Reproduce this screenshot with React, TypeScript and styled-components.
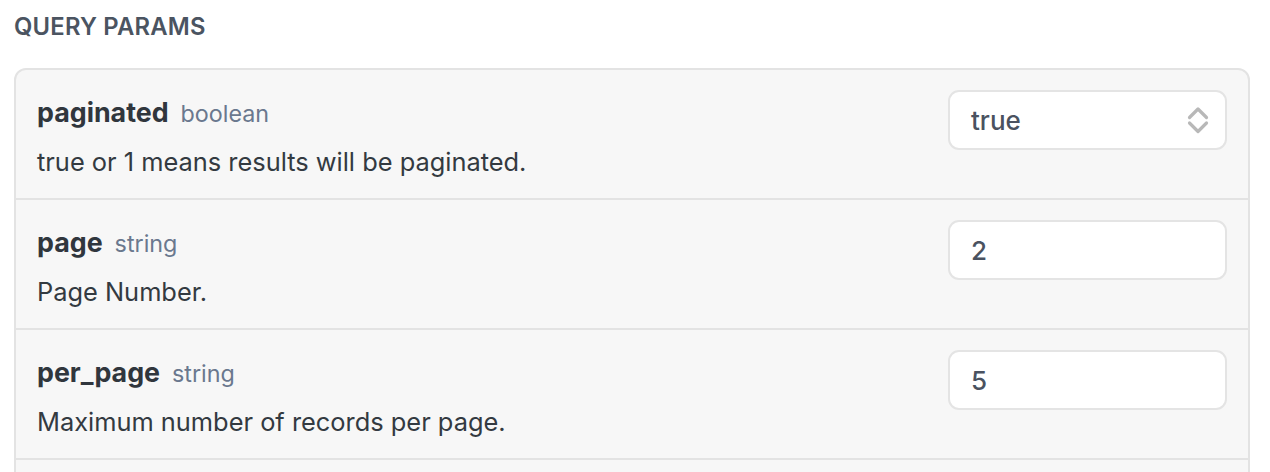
import styled, { createGlobalStyle } from "styled-components";

type Param = {
  name: string;
  type: string;
  description: string;
  value: string;
  kind: "select" | "text";
};

const params: Param[] = [
  {
    name: "paginated",
    type: "boolean",
    description: "true or 1 means results will be paginated.",
    value: "true",
    kind: "select",
  },
  {
    name: "page",
    type: "string",
    description: "Page Number.",
    value: "2",
    kind: "text",
  },
  {
    name: "per_page",
    type: "string",
    description: "Maximum number of records per page.",
    value: "5",
    kind: "text",
  },
];

const SelectChevrons = () => (
  <svg width="22" height="30" viewBox="0 0 22 30" fill="none">
    <path
      d="M2.5 12.5 L11 4 L19.5 12.5"
      stroke="#b8b8b8"
      strokeWidth="3.2"
      strokeLinecap="round"
      strokeLinejoin="round"
    />
    <path
      d="M2.5 18 L11 26.5 L19.5 18"
      stroke="#b8b8b8"
      strokeWidth="3.2"
      strokeLinecap="round"
      strokeLinejoin="round"
    />
  </svg>
);

const App = () => {
  return (
    <>
      <GlobalStyle />
      <Page>
        <SectionTitle>Query Params</SectionTitle>
        <Card>
          {params.map((param) => (
            <Row key={param.name}>
              <Info>
                <NameLine>
                  <Name>{param.name}</Name>
                  <Type>{param.type}</Type>
                </NameLine>
                <Description>{param.description}</Description>
              </Info>
              <Field>
                <FieldValue>{param.value}</FieldValue>
                {param.kind === "select" && <SelectChevrons />}
              </Field>
            </Row>
          ))}
        </Card>
      </Page>
    </>
  );
};

export default App;

/* -------- styles -------- */

const GlobalStyle = createGlobalStyle`
  html, body {
    margin: 0;
    padding: 0;
    overflow: hidden;
    background: #fff;
  }

  body {
    font-family: Inter, "Noto Sans", "Liberation Sans", sans-serif;
    -webkit-font-smoothing: antialiased;
  }
`;

const Page = styled.div`
  padding: 15px 20px 0 14px;
`;

const SectionTitle = styled.h2`
  margin: 0 0 29px 0;
  font-size: 23.8px;
  line-height: 24px;
  font-weight: 600;
  letter-spacing: 0.2px;
  text-transform: uppercase;
  color: #4b5461;
`;

const Card = styled.div`
  background-color: #f7f7f7;
  border: 2px solid #e3e3e3;
  border-radius: 12px;
  padding-bottom: 60px;
`;

const Row = styled.div`
  box-sizing: border-box;
  height: 130px;
  padding: 20px 21px 0 21px;
  display: flex;
  justify-content: space-between;
  align-items: flex-start;
  border-bottom: 2px solid #e3e3e3;
`;

const Info = styled.div`
  display: flex;
  flex-direction: column;
  padding-top: 4px;
`;

const NameLine = styled.div`
  display: flex;
  align-items: baseline;
  gap: 12px;
  line-height: 36px;
  margin-bottom: 12px;
`;

const Name = styled.span`
  font-size: 26.8px;
  font-weight: 700;
  color: #30363d;
`;

const Type = styled.span`
  font-size: 23.3px;
  font-weight: 400;
  color: #6a788e;
`;

const Description = styled.p`
  margin: 0;
  font-size: 25.4px;
  line-height: 36px;
  color: #333a41;
`;

const Field = styled.div`
  width: 279px;
  height: 60px;
  box-sizing: border-box;
  padding: 0 16px 0 21px;
  display: flex;
  align-items: center;
  justify-content: space-between;
  background-color: #fff;
  border: 2px solid #e4e4e4;
  border-radius: 11px;
`;

const FieldValue = styled.span`
  font-size: 26px;
  font-weight: 500;
  color: #4a5260;
`;
